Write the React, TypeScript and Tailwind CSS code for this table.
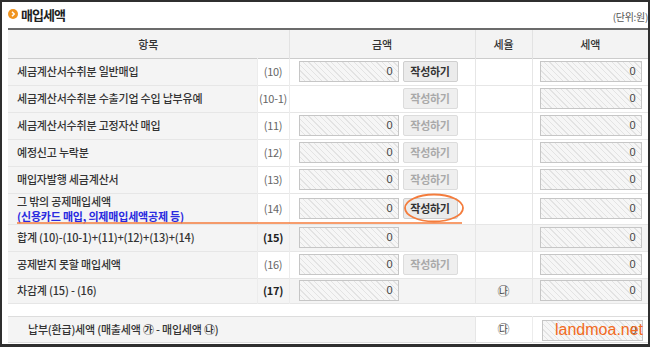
import React from 'react';

type Row = {
  label: string;
  sub?: string;
  no: string;
  amount: boolean;
  btn?: 'on' | 'off';
  sum?: boolean;
  rate?: string;
  h: string;
};

const rows: Row[] = [
  { label: '세금계산서수취분 일반매입', no: '(10)', amount: true, btn: 'on', h: 'h-[27px]' },
  { label: '세금계산서수취분 수출기업 수입 납부유예', no: '(10-1)', amount: false, btn: 'off', h: 'h-[27px]' },
  { label: '세금계산서수취분 고정자산 매입', no: '(11)', amount: true, btn: 'off', h: 'h-[27px]' },
  { label: '예정신고 누락분', no: '(12)', amount: true, btn: 'off', h: 'h-[27px]' },
  { label: '매입자발행 세금계산서', no: '(13)', amount: true, btn: 'off', h: 'h-[27px]' },
  {
    label: '그 밖의 공제매입세액',
    sub: '(신용카드 매입, 의제매입세액공제 등)',
    no: '(14)',
    amount: true,
    btn: 'on',
    h: 'h-[31px]',
  },
  { label: '합계 (10)-(10-1)+(11)+(12)+(13)+(14)', no: '(15)', amount: true, sum: true, h: 'h-[27px]' },
  { label: '공제받지 못할 매입세액', no: '(16)', amount: true, btn: 'off', h: 'h-[27px]' },
  { label: '차감계 (15) - (16)', no: '(17)', amount: true, sum: true, rate: '㉯', h: 'h-[25px]' },
];

// readonly input with the hatched look
const Field = ({ w }: { w: string }) => (
  <div
    className={`${w} h-[21px] border border-[#c6c6c6] bg-[image:repeating-linear-gradient(45deg,#f6f6f6_0px,#f6f6f6_3px,#e3e3e3_3px,#e3e3e3_4px)] pr-[5px] text-right text-[11px] leading-[19px] text-[#444] font-['Liberation_Sans',sans-serif]`}
  >
    0
  </div>
);

const WriteButton = ({ on }: { on: boolean }) => (
  <div
    className={`flex h-[21px] w-[55px] items-center justify-center rounded-[2px] border text-[11px] font-bold tracking-[-0.3px] ${
      on ? 'border-[#cfcfcf] bg-[#ebebeb] text-[#333]' : 'border-[#dcdcdc] bg-[#efefef] text-[#a9a9a9]'
    }`}
  >
    작성하기
  </div>
);

const App = () => {
  return (
    <div className="relative h-[347px] w-[650px] overflow-hidden border-2 border-b-[3px] border-[#2f2f2f] bg-white font-['Noto_Sans_CJK_KR',sans-serif] text-[#333]">
      {/* title */}
      <div className="flex h-[26px] items-center justify-between pl-[6px]">
        <div className="flex items-center gap-[3px]">
          <svg width="10" height="10" viewBox="0 0 10 10" className="-mt-[3px]">
            <circle cx="5" cy="5" r="5" fill="#f0941f" />
            <path d="M4 2.8 L6.2 5 L4 7.2" fill="none" stroke="#fff" strokeWidth="1.5" />
          </svg>
          <span className="text-[13px] font-bold tracking-[-1px] text-[#222]">매입세액</span>
        </div>
        <span className="pt-[2px] text-[10px] tracking-[-0.3px] text-[#555]">(단위:원)</span>
      </div>

      <div className="pl-[6px]">
        <table className="w-[640px] table-fixed border-collapse">
          <colgroup>
            <col className="w-[249px]" />
            <col className="w-[32px]" />
            <col className="w-[186px]" />
            <col className="w-[57px]" />
            <col className="w-[116px]" />
          </colgroup>
          <thead>
            <tr className="h-[29px] border-t-2 border-b border-t-[#6b6b6b] border-b-[#cccccc] bg-[#f3f3f3] text-[11px] font-medium text-[#333]">
              <th colSpan={2} className="border-r border-[#e2e2e2] font-medium">항목</th>
              <th className="border-r border-[#e2e2e2] font-medium">금액</th>
              <th className="border-r border-[#e2e2e2] font-medium">세율</th>
              <th className="font-medium">세액</th>
            </tr>
          </thead>
          <tbody>
            {rows.map((r) => {
              const grey = r.sum ? 'bg-[#f4f4f4]' : 'bg-white';
              return (
                <tr key={r.no} className={`${r.h} border-b border-[#e6e6e6]`}>
                  <td className="border-r border-[#ececec] bg-[#f4f4f4] pl-[9px] text-[11px] leading-[15px] tracking-[-0.2px] font-medium text-[#333]">
                    <div>{r.label}</div>
                    {r.sub && <div className="font-bold text-[#2a2ae0]">{r.sub}</div>}
                  </td>
                  <td
                    className={`border-r border-[#ececec] text-center text-[11px] tracking-[-0.3px] ${grey} ${
                      r.sum ? 'font-bold text-[#222]' : 'text-[#666]'
                    }`}
                  >
                    {r.no}
                  </td>
                  <td className={`border-r border-[#e6e6e6] ${grey}`}>
                    <div className="flex items-center gap-[4px] pl-[9px]">
                      {r.amount ? <Field w="w-[100px]" /> : <div className="w-[100px]" />}
                      {r.btn && <WriteButton on={r.btn === 'on'} />}
                    </div>
                  </td>
                  <td className={`border-r border-[#e6e6e6] text-center text-[12px] text-[#555] ${grey}`}>{r.rate}</td>
                  <td className={grey}>
                    <div className="pl-[7px]">
                      <Field w="w-[102px]" />
                    </div>
                  </td>
                </tr>
              );
            })}
          </tbody>
        </table>

        <table className="mt-[12px] w-[640px] table-fixed border-collapse">
          <colgroup>
            <col className="w-[467px]" />
            <col className="w-[57px]" />
            <col className="w-[116px]" />
          </colgroup>
          <tbody>
            <tr className="h-[26px] border-y border-[#dddddd]">
              <td className="border-r border-[#e6e6e6] bg-[#f4f4f4] pl-[20px] text-[11px] font-medium tracking-[-0.2px] text-[#333]">
                납부(환급)세액 (매출세액 ㉮ - 매입세액 ㉯)
              </td>
              <td className="border-r border-[#ececec] text-center text-[12px] text-[#555]">㉰</td>
              <td className="align-top">
                <div className="pl-[9px] pt-[3px]">
                  <Field w="w-[101px]" />
                </div>
              </td>
            </tr>
          </tbody>
        </table>
      </div>

      {/* orange markup drawn over the form */}
      <svg
        className="pointer-events-none absolute left-[-2px] top-[-2px]"
        width="650"
        height="347"
        viewBox="0 0 650 347"
      >
        <line x1="17" y1="223" x2="462" y2="223" stroke="#f47c3c" strokeWidth="1.6" />
        <ellipse cx="434" cy="208" rx="29" ry="13.5" fill="none" stroke="#f47c3c" strokeWidth="1.8" />
      </svg>

      <div className="pointer-events-none absolute left-[553px] top-[320px] text-[16px] leading-[16px] text-[#f26a21] font-['Liberation_Sans',sans-serif]">
        landmoa.net
      </div>
    </div>
  );
};

export default App;
